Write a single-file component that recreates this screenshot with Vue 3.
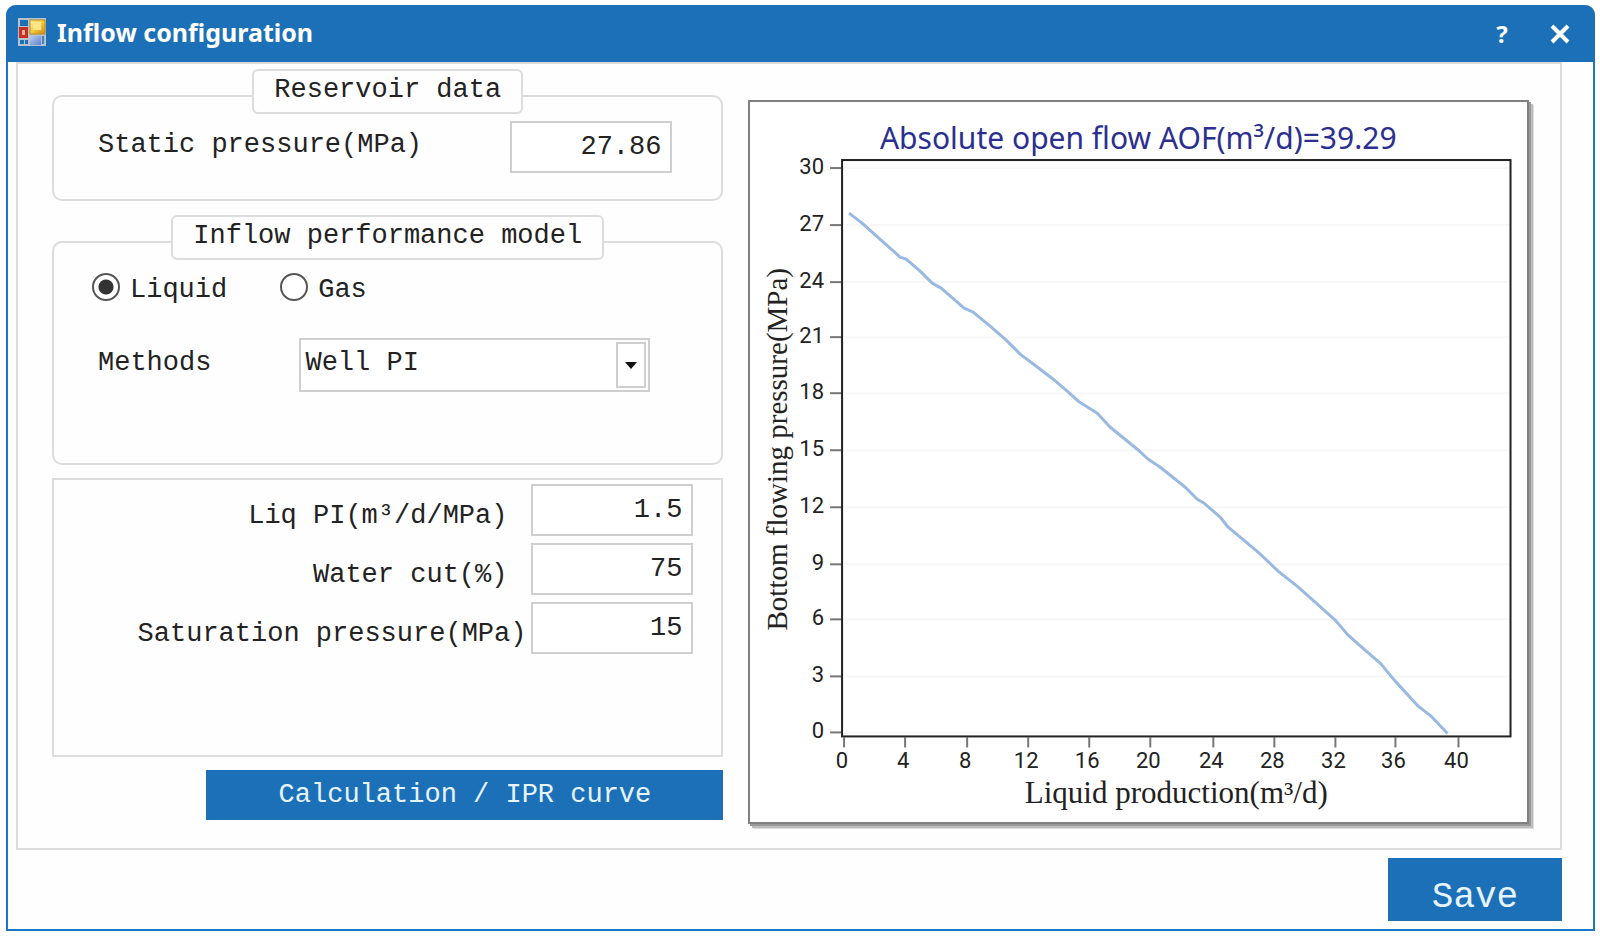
<script setup>
import { ref } from 'vue'

const staticPressure = ref('27.86')
const fluid = ref('liquid')
const method = ref('Well PI')
const params = ref([
  { id: 'liq-pi', label: 'Liq PI(m³/d/MPa)', value: '1.5', wide: false },
  { id: 'water-cut', label: 'Water cut(%)', value: '75', wide: false },
  { id: 'saturation', label: 'Saturation pressure(MPa)', value: '15', wide: true },
])

const yTicks = [
  [30, 66], [27, 123], [24, 180], [21, 235], [18, 291], [15, 348],
  [12, 405], [9, 462], [6, 517], [3, 574], [0, 630],
]
const xTicks = [
  [0, 94], [4, 155], [8, 217], [12, 278], [16, 339], [20, 400],
  [24, 463], [28, 524], [32, 585], [36, 645], [40, 708],
]
const curve = [
  [99, 111], [112, 121], [122, 130], [150, 155], [156, 157], [170, 169], [182, 181], [191, 186],
  [214, 206], [223, 210], [240, 224], [256, 238], [270, 252], [290, 267], [303, 277],
  [317, 289], [328, 299], [347, 311], [360, 325], [387, 347], [398, 357], [410, 365],
  [435, 385], [447, 397], [454, 401], [470, 415], [477, 424], [508, 450], [528, 469],
  [547, 484], [565, 500], [585, 518], [597, 532], [608, 542], [630, 561], [645, 579],
  [668, 604], [681, 614], [697, 631],
].map((p) => p.join(',')).join(' ')
</script>

<template>
  <main class="window">
    <header class="titlebar">
      <svg class="app-icon" viewBox="0 0 28 28" aria-hidden="true">
        <defs>
          <linearGradient id="gold" x1="0" y1="0" x2="1" y2="1">
            <stop offset="0" stop-color="#fff0a0" />
            <stop offset="0.5" stop-color="#f8c936" />
            <stop offset="1" stop-color="#c98a12" />
          </linearGradient>
          <linearGradient id="lilac" x1="0" y1="0" x2="1" y2="1">
            <stop offset="0" stop-color="#b9cdf2" />
            <stop offset="1" stop-color="#5f83cf" />
          </linearGradient>
        </defs>
        <rect width="28" height="28" fill="#b7c3cc" />
        <rect x="2" y="2" width="8" height="6" fill="#1b70b8" />
        <rect x="1" y="9" width="9" height="11" fill="#c5301f" />
        <rect x="4" y="12" width="3" height="5" fill="#f0a79c" />
        <rect x="12" y="2" width="15" height="14" fill="url(#gold)" stroke="#b98a22" />
        <rect x="15" y="4" width="8" height="8" fill="#ffe789" />
        <rect x="2" y="22" width="4" height="4" fill="#1b70b8" />
        <rect x="7" y="22" width="3" height="4" fill="#1b70b8" />
        <rect x="12" y="18" width="11" height="9" fill="url(#lilac)" />
        <rect x="24" y="18" width="2" height="8" fill="#3f80c0" />
      </svg>
      <h1>Inflow configuration</h1>
      <button class="tool help" type="button" aria-label="Help">?</button>
      <button class="tool" type="button" aria-label="Close">
        <svg width="20" height="20" viewBox="0 0 20 20" aria-hidden="true">
          <path d="M2 2 18 18M18 2 2 18" stroke="#fff" stroke-width="4" />
        </svg>
      </button>
    </header>

    <div class="panel">
      <form class="settings" @submit.prevent>
        <section class="group rounded reservoir" aria-labelledby="reservoir-title">
          <h2 id="reservoir-title">Reservoir data</h2>
          <div class="row">
            <label for="static-pressure">Static pressure(MPa)</label>
            <input id="static-pressure" v-model="staticPressure" class="number" type="text">
          </div>
        </section>

        <section class="group rounded model" aria-labelledby="model-title">
          <h2 id="model-title">Inflow performance model</h2>
          <div class="radios">
            <label><input v-model="fluid" type="radio" name="fluid" value="liquid"><span>Liquid</span></label>
            <label><input v-model="fluid" type="radio" name="fluid" value="gas"><span>Gas</span></label>
          </div>
          <div class="methods">
            <label for="method">Methods</label>
            <div class="select">
              <select id="method" v-model="method">
                <option>Well PI</option>
              </select>
              <span class="drop" aria-hidden="true">
                <svg width="12" height="7" viewBox="0 0 12 7"><path d="M0 0H12L6 7Z" fill="#111" /></svg>
              </span>
            </div>
          </div>
        </section>

        <section class="group params">
          <div v-for="p in params" :key="p.id" class="param">
            <label :for="p.id" :class="{ wide: p.wide }">{{ p.label }}</label>
            <input :id="p.id" v-model="p.value" class="number" type="text">
          </div>
        </section>

        <button class="primary calc" type="button">Calculation / IPR curve</button>
      </form>

      <figure class="chart">
        <svg viewBox="0 0 776 720" role="img" aria-label="IPR curve">
          <text class="title" x="388" y="47">Absolute open flow AOF(m³/d)=39.29</text>
          <g v-for="[v, y] in yTicks" :key="'y' + v">
            <line class="grid" x1="94" :y1="y" x2="760" :y2="y" />
            <line class="tick" x1="80" :y1="y" x2="92" :y2="y" />
            <text class="num end" x="74" :y="y + 6">{{ v }}</text>
          </g>
          <g v-for="[v, x] in xTicks" :key="'x' + v">
            <line class="tick" :x1="x" y1="635" :x2="x" y2="645" />
            <text class="num mid" :x="x - 2" y="666">{{ v }}</text>
          </g>
          <rect class="plot" x="92" y="58" width="668" height="576" />
          <polyline class="curve" :points="curve" />
          <text class="axis x-axis" x="426" y="701">Liquid production(m³/d)</text>
          <text class="axis" transform="translate(37 347) rotate(-90)">Bottom flowing pressure(MPa)</text>
        </svg>
      </figure>
    </div>

    <footer class="footer">
      <button class="primary save" type="button">Save</button>
    </footer>
  </main>
</template>

<style>
body {
  background: #fff;
}
</style>

<style scoped>
.window,
.window * {
  box-sizing: border-box;
}

.window {
  margin: 5px 5px 0 6px;
  border: 2px solid #1b76c4;
  border-top: 0;
  border-radius: 10px 10px 0 0;
  background: #fefefe;
  color: #222;
  font: 27px/32px "Liberation Mono", monospace;
}

.titlebar {
  display: flex;
  align-items: center;
  height: 57px;
  margin: 0 -2px;
  padding: 0 23px 0 12px;
  border-radius: 10px 10px 0 0;
  background: #1c70b8;
  color: #fff;
}

.app-icon {
  width: 28px;
  height: 28px;
  margin-bottom: 4px;
}

h1 {
  flex: 1;
  margin: 0 0 4px 11px;
  font: 700 25px/32px "Noto Sans", sans-serif;
}

.tool {
  display: flex;
  align-items: center;
  justify-content: center;
  width: 24px;
  height: 32px;
  padding: 0;
  border: 0;
  background: none;
  color: #fff;
}

.help {
  margin-right: 34px;
  font: 700 24px/32px "Noto Sans", sans-serif;
}

.panel {
  display: grid;
  grid-template-columns: minmax(0, 671fr) minmax(0, 780fr);
  gap: 25px;
  margin: 0 31px 0 8px;
  padding: 31px 31px 24px 34px;
  border: 2px solid #dcdcdc;
}

.settings {
  display: flex;
  flex-direction: column;
}

.group {
  display: flex;
  flex-direction: column;
  border: 2px solid #dcdcdc;
}

.rounded {
  border-radius: 10px;
}

.reservoir {
  min-height: 106px;
  margin-bottom: 40px;
}

.model {
  min-height: 224px;
  margin-bottom: 13px;
}

.params {
  gap: 7px;
  min-height: 279px;
  margin-bottom: 13px;
  padding: 4px 28px 4px 0;
}

h2 {
  align-self: center;
  margin: -28px 0 0;
  padding: 3px 20px 6px;
  border: 2px solid #dcdcdc;
  border-radius: 6px;
  background: #fefefe;
  font: inherit;
}

.row {
  display: flex;
  align-items: center;
  justify-content: space-between;
  padding: 7px 49px 0 44px;
}

.row label {
  padding-bottom: 4px;
}

.number {
  width: 162px;
  height: 52px;
  padding: 0 9px;
  border: 2px solid #cfcfcf;
  border-radius: 0;
  background: #fff;
  color: inherit;
  font: inherit;
  text-align: right;
}

.radios {
  display: flex;
  gap: 53px;
  padding: 8px 0 0 38px;
}

.radios label {
  display: flex;
  align-items: center;
  gap: 10px;
}

.radios span {
  padding-top: 6px;
}

.radios input {
  appearance: none;
  width: 28px;
  height: 28px;
  margin: 0;
  border: 2px solid #555;
  border-radius: 50%;
  background: #fff;
}

.radios input:checked {
  background: radial-gradient(circle, #333 7px, #fff 8px);
}

.methods {
  display: flex;
  align-items: center;
  padding: 32px 71px 0 44px;
}

.methods label {
  flex: 1;
  padding-bottom: 4px;
}

.select {
  position: relative;
  width: 351px;
}

.select select {
  appearance: none;
  display: block;
  width: 100%;
  height: 54px;
  padding: 0 40px 4px 4px;
  border: 2px solid #cfcfcf;
  border-radius: 0;
  background: #fff;
  color: inherit;
  font: inherit;
}

.drop {
  position: absolute;
  top: 4px;
  right: 4px;
  bottom: 4px;
  display: flex;
  align-items: center;
  justify-content: center;
  width: 30px;
  border: 2px solid #cfcfcf;
  pointer-events: none;
}

.param {
  display: flex;
  align-items: center;
  justify-content: flex-end;
}

.param label {
  padding: 11px 24px 0 0;
}

.param .wide {
  padding-right: 5px;
}

.primary {
  border: 0;
  background: #1c70b8;
  color: #e6f4ff;
  font: inherit;
}

.calc {
  align-self: flex-end;
  width: 517px;
  height: 50px;
}

.chart {
  align-self: start;
  margin: 5px 0 0;
  border: 2px solid #808080;
  background: #fff;
  box-shadow: 2px 2px 0 #999, 4px 4px 0 #bdbdbd, 5px 5px 0 #dedede;
}

.chart svg {
  display: block;
  width: 100%;
}

.plot {
  fill: none;
  stroke: #222;
  stroke-width: 2;
}

.grid {
  stroke: #f7f7f7;
  stroke-width: 2;
}

.tick {
  stroke: #777;
  stroke-width: 2;
}

.curve {
  fill: none;
  stroke: #9ab9e1;
  stroke-width: 3;
  stroke-linejoin: round;
}

.title {
  fill: #2b2f8f;
  font: 30px "Noto Sans", sans-serif;
  text-anchor: middle;
}

.num {
  fill: #222;
  font: 22px Roboto, sans-serif;
}

.end {
  text-anchor: end;
}

.mid {
  text-anchor: middle;
}

.axis {
  fill: #222;
  font: 29px "Liberation Serif", serif;
  text-anchor: middle;
}

.x-axis {
  font-size: 31px;
}

.footer {
  display: flex;
  justify-content: flex-end;
  padding: 8px 31px 8px;
}

.save {
  width: 174px;
  height: 63px;
  padding: 16px 0 0;
  font-size: 36px;
}
</style>
